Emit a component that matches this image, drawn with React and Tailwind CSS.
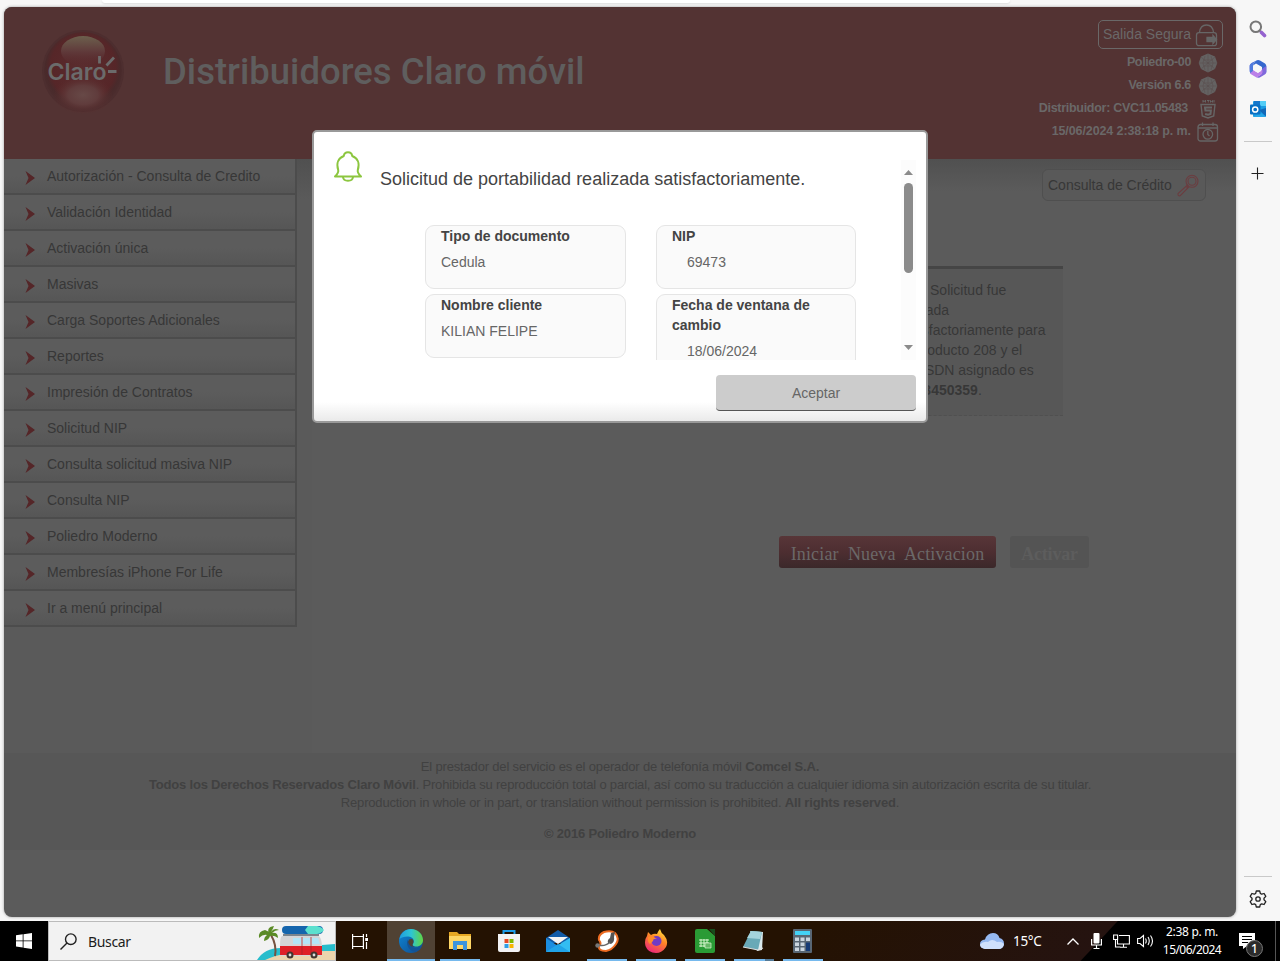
import React from "react";

const menu = [
  "Autorización - Consulta de Credito",
  "Validación Identidad",
  "Activación única",
  "Masivas",
  "Carga Soportes Adicionales",
  "Reportes",
  "Impresión de Contratos",
  "Solicitud NIP",
  "Consulta solicitud masiva NIP",
  "Consulta NIP",
  "Poliedro Moderno",
  "Membresías iPhone For Life",
  "Ir a menú principal",
];

function ClaroLogo() {
  return (
    <svg className="block h-[92px] w-[92px] shrink-0" viewBox="0 0 92 92">
      <defs>
        <radialGradient id="ball" cx="50%" cy="45%" r="52%">
          <stop offset="0" stopColor="#5a2c2e" />
          <stop offset="0.8" stopColor="#562628" />
          <stop offset="0.92" stopColor="#492a2b" />
          <stop offset="1" stopColor="#4b2c2d" />
        </radialGradient>
        <radialGradient id="glow">
          <stop offset="0" stopColor="#674947" />
          <stop offset="0.5" stopColor="#603c3c" />
          <stop offset="1" stopColor="#5a2a2b" stopOpacity="0" />
        </radialGradient>
        <linearGradient id="shine" x1="0" y1="0" x2="0" y2="1">
          <stop offset="0" stopColor="#6c604d" />
          <stop offset="0.5" stopColor="#603b3b" />
          <stop offset="1" stopColor="#5a2c30" stopOpacity="0" />
        </linearGradient>
      </defs>
      <circle cx="46" cy="46" r="41" fill="#4d2e2f" />
      <circle cx="46" cy="46" r="39" fill="url(#ball)" />
      <ellipse cx="46" cy="70" rx="30" ry="19" fill="url(#glow)" />
      <ellipse cx="46" cy="26" rx="22" ry="15" fill="url(#shine)" />
      <text x="10.500" y="54.500" fontSize="22.500" fontWeight="600" fontFamily="Inter, sans-serif" fill="#6b6b6b" textLength="59" lengthAdjust="spacingAndGlyphs">Claro</text>
      <path d="M62.500 31v7.500M69.500 40.500l7.500-8M71 46.500h8.500" stroke="#6b6b6b" strokeWidth="2.800" fill="none" />
    </svg>
  );
}

function Lock() {
  return (
    <svg className="block h-6 w-6" viewBox="0 0 24 24" fill="none" stroke="#666" strokeWidth="1.300">
      <path d="M4.500 9.500C5 4.500 8 2 11.500 2s6.500 2.500 7 7.500" />
      <rect x="1.500" y="9.700" width="20" height="13" rx="2.500" />
      <path d="M12 14.500h6v-2l3.500 4-3.500 4v-2h-6z" fill="#666" />
    </svg>
  );
}

function Sphere() {
  return (
    <svg className="block h-5 w-5" viewBox="0 0 20 20">
      <path d="M10 .5l7 3 2.300 6.500-2.300 6-7 3.500-7-3.500L.7 10 3 3.500z" fill="#646262" />
      <path d="M10 1v18M1 10h18M3 4l14 12M17 4L3 16M5 7h10M5 13h10M7 3L5 10l2 7M13 3l2 7-2 7" stroke="#5b4e4e" strokeWidth=".5" fill="none" />
    </svg>
  );
}

function Html5() {
  return (
    <svg className="block h-5 w-5" viewBox="0 0 20 20" fill="none" stroke="#666">
      <path d="M3 5.500h14l-1.300 11.500L10 19l-5.700-2z" strokeWidth="1.400" />
      <path d="M14 8.500H7l.4 3h5.500l-.4 3.500-2.500.8-2.900-.8" strokeWidth="2" />
      <path d="M5 1v2.500M7.500 1v2.500M5 2.200h2.500M9 1.500h2.500M10.300 1.500v2M12.500 3.500V1.500l1 1 1-1v2M16 1v2.500" strokeWidth="1" />
    </svg>
  );
}

function CalendarClock() {
  return (
    <svg className="block h-5 w-[22px]" viewBox="0 0 22 20" fill="none" stroke="#666" strokeWidth="1.300">
      <rect x="1" y="2.500" width="19.500" height="16.500" rx="2.500" />
      <path d="M1 6h19.500M5.500.5v3.500M16 .5v3.500" />
      <circle cx="10.800" cy="12.300" r="4.800" />
      <path d="M10.800 9v3.500l1.700 1.500" />
    </svg>
  );
}

function HeaderRow({ label, spacing, children }) {
  return (
    <div className={"flex h-[23px] items-center justify-end " + spacing}>
      <span className="-mt-[1px] whitespace-nowrap text-[12.500px] font-bold">{label}</span>
      <span className="mt-px flex w-[22px] justify-center">{children}</span>
    </div>
  );
}

function Header() {
  return (
    <header className="flex h-[152px] shrink-0 justify-between bg-[#533333]">
      <div className="flex pl-[33px] pt-[18px]">
        <ClaroLogo />
        <h1 className="ml-[34px] mt-[25px] whitespace-nowrap font-['Roboto',sans-serif] text-[36.500px] font-medium leading-[44px] text-[#5f5e5e]">Distribuidores Claro móvil</h1>
      </div>
      <div className="flex flex-col items-end pr-[13px] pt-[13px] text-[#6a6868]">
        <div className="flex h-[29px] w-[125px] items-center justify-between rounded-[5px] border border-[#6a6868] pl-1 pr-[3px]">
          <span className="whitespace-nowrap text-[14px]">Salida Segura</span>
          <Lock />
        </div>
        <div className="mt-[2px] flex flex-col pr-1">
          <HeaderRow spacing="gap-[6px] tracking-[-0.360px]" label="Poliedro-00"><Sphere /></HeaderRow>
          <HeaderRow spacing="gap-[6px] tracking-[-0.320px]" label="Versión 6.6"><Sphere /></HeaderRow>
          <HeaderRow spacing="gap-[9px] tracking-[-0.280px]" label="Distribuidor: CVC11.05483"><Html5 /></HeaderRow>
          <HeaderRow spacing="gap-[6px] tracking-[-0.100px]" label="15/06/2024 2:38:18 p. m."><CalendarClock /></HeaderRow>
        </div>
      </div>
    </header>
  );
}

function Sidebar() {
  return (
    <nav className="w-[308px] shrink-0 bg-[linear-gradient(#505050,#5a5a5a_40px)]">
      <ul className="w-[293px] border-r-2 border-[#4c4c4c]">
        {menu.map((m) => (
          <li key={m} className="flex h-9 items-center border-b-2 border-[#4c4c4c] bg-linear-to-b from-[#5c5c5c] from-50% to-[#565656] text-[14px] text-[#373737]">
            <svg className="ml-[21px] mt-[3px] block h-[14px] w-[10px]" viewBox="0 0 10 14">
              <path d="M.5 0L10 7 .5 14 3.500 7z" fill="#552628" />
            </svg>
            <span className="ml-3 whitespace-nowrap">{m}</span>
          </li>
        ))}
      </ul>
    </nav>
  );
}

function Main() {
  return (
    <main className="flex flex-1 flex-col items-end bg-[linear-gradient(#505050,#5b5b5b_32px)]">
      <div className="mr-[30px] mt-[10px] flex h-8 w-[164px] items-center rounded-md border border-[#4f4f4f] bg-[#595959] pl-[5px] text-[14px] text-[#373737]">
        <span className="whitespace-nowrap">Consulta de Crédito</span>
        <svg className="ml-[4px] block h-[23px] w-[23px] shrink-0" viewBox="0 0 23 23" fill="none" stroke="#6b3d40" strokeWidth="1.100">
          <circle cx="16" cy="7.300" r="6" />
          <circle cx="16" cy="7.300" r="4" />
          <path d="M11.500 11L2 19.500q-.5 1.800 1.200 2.400l1-.2 8.600-8.700M12.500 11.500l-2 2" />
        </svg>
      </div>
      <div className="mr-[173px] mt-[65px] h-[150px] w-[180px] border-b border-t-[3px] border-b-[#505050] border-t-[#454545] bg-[#575757] pl-[17px] pt-[11px] text-[14px] leading-5 text-[#373737] [border-bottom-style:dashed]">
        <p className="whitespace-nowrap"><span className="ml-[9px]">Su Solicitud fue</span><br />enviada<br />satisfactoriamente para<br />el producto 208 y el<br />MSISDN asignado es<br /><b>3133450359</b>.</p>
      </div>
      <div className="mr-[147px] mt-[120px] flex gap-[14px] font-['Liberation_Serif',serif] text-[18px] font-bold">
        <div className="flex h-8 w-[217px] items-center justify-center whitespace-pre rounded-[3px] bg-linear-to-b from-[#583638] via-[#4d2e31] to-[#3b282a] pt-[5px] font-normal tracking-[0.140px] text-[#6b6868]">Iniciar  Nueva  Activacion</div>
        <div className="flex h-8 w-[79px] items-center justify-center rounded-[3px] bg-[#545454] pt-[5px] tracking-[-0.200px] text-[#5d5d5d]">Activar</div>
      </div>
    </main>
  );
}

function Card({ label, value, indent }) {
  return (
    <div className="rounded-[9px] border border-[#e5e5e5] bg-[#fafafa] pb-4 pl-[15px] pr-[14px] text-[14px] leading-5">
      <div className="font-bold text-[#444]">{label}</div>
      <div className={"mt-[6px] text-[#666] " + indent}>{value}</div>
    </div>
  );
}

function Dialog() {
  return (
    <div className="absolute left-[312px] top-[130px] flex h-[293px] w-[616px] flex-col rounded-[5px] border-2 border-[#999] bg-[linear-gradient(#fff_270px,#eaeaea)]">
      <div className="flex h-[228px] pl-[19px] pr-[10px]">
        <svg className="mt-[18px] block h-[32px] w-[30px] shrink-0" viewBox="0 0 30 32" fill="none" stroke="#8cc63f" strokeWidth="2" strokeLinejoin="round">
          <path d="M2 26.500C4.500 24 5.800 22.500 5.200 20 3 13 5.500 8 10.800 6c.6-5 7.800-5 8.400 0C24.500 8 27 13 24.800 20c-.6 2.500 .7 4 3.200 6.500z" />
          <path d="M10 27c.5 5 9.500 5 10 0" />
        </svg>
        <div className="mt-7 flex h-[200px] flex-1 overflow-hidden">
          <div className="flex-1">
            <p className="ml-[17px] mt-[7px] whitespace-nowrap text-[18px] leading-6 text-[#444]">Solicitud de portabilidad realizada satisfactoriamente.</p>
            <div className="ml-[62px] mt-[34px] grid w-fit grid-cols-[201px_200px] items-start gap-x-[30px] gap-y-[5px]">
              <Card label="Tipo de documento" value="Cedula" indent="" />
              <Card label="NIP" value="69473" indent="ml-[15px]" />
              <Card label="Nombre cliente" value="KILIAN FELIPE" indent="" />
              <Card label="Fecha de ventana de cambio" value="18/06/2024" indent="ml-[15px]" />
            </div>
          </div>
          <div className="flex w-[15px] shrink-0 flex-col items-center justify-between bg-[#fcfcfc] pb-[10px] pt-[10px]">
            <div className="flex flex-col items-center">
              <svg className="block h-[5px] w-[9px]" viewBox="0 0 9 5"><path d="M0 5L4.500 0 9 5z" fill="#8b8b8b" /></svg>
              <div className="mt-2 h-[90px] w-[9px] rounded-full bg-[#8b8b8b]" />
            </div>
            <svg className="block h-[5px] w-[9px]" viewBox="0 0 9 5"><path d="M0 0h9L4.500 5z" fill="#8b8b8b" /></svg>
          </div>
        </div>
      </div>
      <button className="mr-[10px] mt-[15px] h-9 w-[200px] self-end rounded-[4px] border-b border-[#555] bg-[#ccc] pt-[2px] text-[14px] text-[#666]">Aceptar</button>
    </div>
  );
}

function Footer() {
  return (
    <footer className="h-[97px] shrink-0 bg-[#575757] pt-[5px] text-center text-[13px] leading-[18px] text-[#414141]">
      <p className="tracking-[-0.170px]">El prestador del servicio es el operador de telefonía móvil <b>Comcel S.A.</b></p>
      <p className="whitespace-nowrap tracking-[-0.185px]"><b>Todos los Derechos Reservados Claro Móvil</b>. Prohibida su reproducción total o parcial, así como su traducción a cualquier idioma sin autorización escrita de su titular.</p>
      <p className="tracking-[-0.170px]">Reproduction in whole or in part, or translation without permission is prohibited. <b>All rights reserved</b>.</p>
      <p className="mt-[13px] font-bold tracking-[-0.180px]">© 2016 Poliedro Moderno</p>
    </footer>
  );
}

function EdgeBar() {
  return (
    <aside className="flex w-11 flex-col items-center">
      <svg className="mt-[13px] block h-[18px] w-[18px]" viewBox="0 0 18 18" fill="none">
        <circle cx="6.800" cy="6.800" r="5.300" stroke="#777" strokeWidth="2" />
        <path d="M11 11l1.500 1.500" stroke="#666" strokeWidth="2" />
        <path d="M12.500 12.500l3 3" stroke="#9563cf" strokeWidth="3.600" strokeLinecap="round" />
      </svg>
      <svg className="mt-[22px] block h-[18px] w-[18px]" viewBox="0 0 18 18">
        <path d="M9 0L5 2.300Q3.500 5 3.700 11L1.500 13.500Q.5 12 .7 5.500 1 4 3 3z" fill="#5a64d4" />
        <path d="M8 .3Q9.500-.2 11 .5l5 3q1.300 1 1.300 2.500v6.500L13 10V7L7 3.500 4 5.500Q5 1.500 8 .3z" fill="#3568ce" />
        <path d="M17.300 6v6q0 1.500-1.500 2.500l-5 2.900Q9 18 7.500 17.300L12 14.500Q13.500 13 13 9z" fill="#8069dc" />
        <path d="M13 9.500q1.500 3.500-1 5.200L7.500 17.400l-5-2.800Q.5 13.500 1 12l3-2 5 3z" fill="#bb80e8" />
        <path d="M.7 5.500Q.9 4 2.500 3L7 .8Q3.800 3 4 7v4L1.300 13Q.5 12 .7 10z" fill="#507bdd" />
        <path d="M9 5.300l3.200 1.900v3.700L9 12.700l-3.200-1.800V7.200z" fill="#f7f7f7" />
      </svg>
      <svg className="mt-[22px] block h-[18px] w-[18px]" viewBox="0 0 18 18">
        <rect x="4" y="1" width="13" height="16" rx="1" fill="#1a9de2" />
        <path d="M5 1h6v5H5z" fill="#1576cb" />
        <path d="M11 1h6v5h-6z" fill="#53cdf6" />
        <path d="M10 10l7-2v8.500z" fill="#1368b8" />
        <path d="M4 17h13l-5-4z" fill="#28a7e8" />
        <rect x="1" y="4.500" width="10.500" height="10" rx="1" fill="#0870c4" />
        <circle cx="6.200" cy="9.500" r="2.600" fill="none" stroke="#fff" strokeWidth="1.500" />
      </svg>
      <div className="mt-[23px] h-px w-7 bg-[#c9c9c9]" />
      <svg className="mr-px mt-[25px] block h-[13px] w-[13px]" viewBox="0 0 13 13"><path d="M6.500 .5v12M.5 6.500h12" stroke="#222" strokeWidth="1.100" /></svg>
      <div className="mt-auto h-px w-7 bg-[#c9c9c9]" />
      <svg className="mb-[13px] mt-[13px] block h-[18px] w-[18px]" viewBox="0 0 18 18" fill="none" stroke="#222" strokeWidth="1.300" strokeLinejoin="round">
        <path d="M7.300 1h3.400l.6 2.400 1.400.8 2.400-.7 1.700 2.900L15 8.200v1.600l1.800 1.800-1.700 2.900-2.400-.7-1.400.8-.6 2.400H7.300l-.6-2.400-1.400-.8-2.400.7-1.700-2.900L3 9.800V8.200L1.200 6.400l1.700-2.900 2.400.7 1.400-.8z" />
        <circle cx="9" cy="9" r="2.200" />
      </svg>
    </aside>
  );
}

function BeachVan() {
  return (
    <svg className="block h-[38px] w-[79px]" viewBox="0 0 79 38">
      <path d="M1 38Q9 25 27 26L79 22V38z" fill="#27bdcc" />
      <path d="M9 38Q28 28 79 29V38z" fill="#ecd4ac" />
      <path d="M15 13q6 10 4 21" stroke="#765340" strokeWidth="2" fill="none" />
      <path d="M14 14Q9 5 18 4q-1 3-3 6 3-5 8-2-4 0-7 3 6-1 6 5-4-3-8-2-1 4-6 5 0-4 3-6-4-1-8 3Q2 9 9 8q3 1 5 3z" fill="#5b8b26" />
      <rect x="26" y="4" width="41" height="8" rx="4" fill="#1565ad" />
      <path d="M52 4h9q5 1 7 4-2 3-7 4h-9l-3-4z" fill="#5ce0ce" />
      <path d="M27 13h36" stroke="#54616b" strokeWidth="1.500" />
      <path d="M26 14h36q3 0 4 9v11H24V24q0-9 2-10z" fill="#d5d5d7" />
      <path d="M24 24h42v9H24z" fill="#df2027" />
      <path d="M37 16h8v6h-8zM47 16h7v6h-7zM56 16h6l2 6h-8z" fill="#b2e5f7" />
      <path d="M46 15v18M55 15v18" stroke="#a22228" strokeWidth=".7" />
      <circle cx="34" cy="33" r="3.500" fill="#42352f" /><circle cx="58" cy="33" r="3.500" fill="#42352f" />
      <circle cx="34" cy="33" r="1.400" fill="#ddd" /><circle cx="58" cy="33" r="1.400" fill="#ddd" />
    </svg>
  );
}

function Tile({ children, active, line }) {
  return (
    <div className={"flex h-10 w-[48px] flex-col items-center justify-between " + (active ? "bg-[#504234]" : "")}>
      <div className="flex h-[38px] items-center pt-[2px]">{children}</div>
      <div className={"h-[2px] " + line} />
    </div>
  );
}

function Taskbar() {
  return (
    <div className="flex h-10 shrink-0 bg-[linear-gradient(133deg,#241202_0,#241202_600px,#251310_817px,#000_818px)] font-['Noto_Sans',sans-serif] text-white">
      <div className="flex w-12 items-center justify-center bg-black">
        <svg className="block h-4 w-4" viewBox="0 0 16 16" fill="#fff"><path d="M0 2.200l6.700-.9v6.200H0zM7.500 1.200L16 0v7.500H7.500zM0 8.300h6.700v6.200L0 13.600zM7.500 8.300H16V16l-8.500-1.200z" /></svg>
      </div>
      <div className="flex h-10 w-[288px] items-center border border-[#bbb] bg-[#f2f2f2] text-[#1c1c1c]">
        <svg className="ml-[11px] block h-[17px] w-[17px]" viewBox="0 0 17 17" fill="none" stroke="#222" strokeWidth="1.400"><circle cx="10.800" cy="6.200" r="5.300" /><path d="M7 10L.5 16.500" /></svg>
        <span className="ml-[11px] text-[14px] tracking-[-0.350px]">Buscar</span>
        <span className="ml-auto overflow-hidden"><BeachVan /></span>
      </div>
      <div className="flex w-[51px] items-center justify-center bg-[#241202]">
        <svg className="mr-[3px] block h-[17px] w-[17px]" viewBox="0 0 17 17" fill="none" stroke="#fff" strokeWidth="1.200"><path d="M.6 1v2.500h10.800V1M.6 16v-2.500h10.800V16M.6 3.500v10M11.400 3.500v10M14.500 1v3M14.500 9v7" /><path d="M13.200 5h2.800v3h-2.800z" fill="#fff" stroke="none" /></svg>
      </div>
      <div className="flex">
        <Tile active line="w-12 bg-[#76b9ed]">
          <svg className="block h-6 w-6" viewBox="0 0 24 24">
            <defs>
              <linearGradient id="edgeTop" x1="0" x2="1"><stop stopColor="#1f9de0" /><stop offset=".5" stopColor="#2ec5d3" /><stop offset="1" stopColor="#62d63f" /></linearGradient>
              <linearGradient id="edgeLow" x1="0" y1="0" x2="1" y2="1"><stop stopColor="#0d88d8" /><stop offset="1" stopColor="#114a8b" /></linearGradient>
            </defs>
            <circle cx="12" cy="12" r="12" fill="url(#edgeLow)" />
            <path d="M.5 10C1.500 4 6.500 0 12 0c7 0 12 5.500 12 11 0 4-3 6.500-6.500 6.500-3 0-4.500-1.200-3.500-2.500 2.500-4-1-8-5.500-7.500Q3 7.500.5 10z" fill="url(#edgeTop)" />
            <path d="M8.500 11C6.500 17 11 22.500 17 23q4-1.500 5.500-5c-5 3-10 .5-10.500-3z" fill="#135395" />
            <path d="M10 10.500q4-1.500 4.500 1.500 0 2-1 3.500-.5 1.500 2 2.300-4 .2-5.500-2.500T10 10.500z" fill="#504234" />
          </svg>
        </Tile>
        <Tile line="ml-[2px] w-10 bg-[#76b9ed]">
          <svg className="ml-[2px] block h-5 w-[22px]" viewBox="0 0 22 20"><path d="M0 1h8l2 2h12v15H0z" fill="#e7a824" /><path d="M0 5h22v13H0z" fill="#ffd766" /><path d="M4 19v-9h14v9h-4v-5H8v5z" fill="#3d94dc" /></svg>
        </Tile>
        <Tile line="w-0">
          <svg className="ml-[4px] block h-6 w-6" viewBox="0 0 24 24"><path d="M6.500 6V2h11v4" fill="none" stroke="#1c9be8" strokeWidth="2" /><path d="M1 5h22v16q0 2-2 2H3q-2 0-2-2z" fill="#f2f2f4" /><path d="M7.500 10h4v4h-4z" fill="#e84a24" /><path d="M12.500 10h4v4h-4z" fill="#7fba00" /><path d="M7.500 15h4v4h-4z" fill="#2f9ee6" /><path d="M12.500 15h4v4h-4z" fill="#f7b500" /></svg>
        </Tile>
        <Tile line="w-0">
          <svg className="ml-[6px] block h-6 w-6" viewBox="0 0 24 24"><path d="M0 9L12 1l12 8v5H0z" fill="#125ba7" /><path d="M2 8h20L12 15z" fill="#f4f4f4" /><path d="M0 9l12 8-12 6z" fill="#1b8de0" /><path d="M24 9v14H0l24-14z" fill="#33bdf2" /><path d="M0 23l12-8 12 8z" fill="#20a3e8" /></svg>
        </Tile>
        <Tile line="ml-2 w-10 bg-[#76b9ed]">
          <svg className="ml-[8px] block h-6 w-6" viewBox="0 0 24 24">
            <path d="M4 11Q3 6 9 3q7-2 11 1 5 5 1 11-4 6-10 7-8 0-7-5 3-2 0-6z" fill="#fff" stroke="#ed6b21" strokeWidth="2" />
            <path d="M13 14q-1-3 2-5l1-5 4-1-1 5q1 5-3 7z" fill="#555" />
            <path d="M3 16q7 2 12-3" fill="none" stroke="#666" strokeWidth="1.500" />
            <circle cx="2.500" cy="16.500" r="2.200" fill="#777" />
          </svg>
        </Tile>
        <Tile line="ml-[10px] w-10 bg-[#76b9ed]">
          <svg className="ml-[10px] block h-6 w-6" viewBox="0 0 24 24">
            <defs><linearGradient id="fox" x1=".8" y1="0" x2=".3" y2="1"><stop stopColor="#ffe640" /><stop offset=".45" stopColor="#ff8427" /><stop offset="1" stopColor="#ed267a" /></linearGradient></defs>
            <path d="M3 7l1-4 3 3q3-2 6-1Q14 2 16 0q1 4 4 6 5 6 2 12-4 6-10 6Q4 24 1.500 17 0 11 3 7z" fill="url(#fox)" />
            <circle cx="12.500" cy="12" r="5" fill="#713bc5" /><path d="M4 8q4-2 9 2-4-1-4 2l-3 3q-3-2-2-7z" fill="#ff8b2b" />
          </svg>
        </Tile>
        <Tile line="ml-3 w-10 bg-[#76b9ed]">
          <svg className="ml-[12px] block h-6 w-5" viewBox="0 0 20 24"><path d="M2 0h10l8 7v15q0 2-2 2H2q-2 0-2-2V2Q0 0 2 0z" fill="#2a9b35" /><path d="M14 0h6v7z" fill="#174d1c" /><path d="M4 11h10M4 14h10M4 17h8M6 10v8M9 10v8M12 10v8" stroke="#d8f5ce" strokeWidth="1" /><path d="M10 14h6v5h-6z" fill="#65b765" stroke="#d8f5ce" strokeWidth=".7" /></svg>
        </Tile>
        <Tile line="ml-[14px] w-10 bg-[linear-gradient(90deg,#76b9ed_31px,#547a97_31px)]">
          <svg className="ml-[12px] block h-6 w-6" viewBox="0 0 24 24"><path d="M9 2l13 1-1 18-5 1z" fill="#d9e9ed" /><path d="M10 2l11 1-4 18-15-3z" fill="#69a9b7" /><path d="M10 2l11 1-2 7-13-1z" fill="#a4d3dc" /><path d="M2 18l15 3 5-2" fill="none" stroke="#ddd" strokeWidth="1.200" /></svg>
        </Tile>
        <Tile line="ml-4 w-10 bg-[#76b9ed]">
          <svg className="ml-[15px] block h-6 w-[19px]" viewBox="0 0 19 24"><rect width="19" height="24" rx="1" fill="#586674" /><path d="M2 2h15v4H2z" fill="#43d2f6" /><path d="M2 8.500h4v3.500H2zM7.500 8.500h4v3.500h-4zM13 8.500h4v3.500h-4zM2 13.500h4V17H2zM7.500 13.500h4V17h-4zM2 18.500h4V22H2zM7.500 18.500h4V22h-4z" fill="#cad5df" /><path d="M13 13.500h4V22h-4z" fill="#163b76" /></svg>
        </Tile>
      </div>
      <div className="ml-auto flex items-center">
        <svg className="block h-4 w-6" viewBox="0 0 24 16"><path d="M5 16Q0 15 0 11q0-4 5-4.500Q7 0 13 0q5 0 6.500 5 4.500 1 4.500 5.500T19 16z" fill="#96b9f1" /><path d="M5 16Q0 15 0 11.500 3 8 8 9q4-4 9 0 4-1 7 2-1 5-5 5z" fill="#cfe0fc" /></svg>
        <span className="ml-[9px] w-[46px] text-[13.500px] tracking-[-0.300px]">15°C</span>
        <svg className="ml-[8px] block h-[7px] w-3" viewBox="0 0 12 7" fill="none" stroke="#fff" strokeWidth="1.300"><path d="M.5 6.500L6 1l5.500 5.500" /></svg>
        <svg className="ml-3 block h-4 w-[11px]" viewBox="0 0 11 16"><rect x="2.500" width="6" height="10.500" rx="1" fill="#fff" /><path d="M.6 6v6h9.800V6M5.500 12v3.500M2.500 15.500h6" stroke="#fff" strokeWidth="1.200" fill="none" /></svg>
        <svg className="ml-[11px] block h-[14px] w-[17px]" viewBox="0 0 17 14" fill="none" stroke="#fff" strokeWidth="1.100"><path d="M6 1.500h10.400v8.500H4.500V6M10.500 10v3M7 13.200h7M.6 1h4v4.500h-4zM2.500 5.500V13h5" /></svg>
        <svg className="ml-[7px] block h-[14px] w-[17px]" viewBox="0 0 17 14" fill="none" stroke="#fff" strokeWidth="1.100"><path d="M.6 4.500H3L6.500 1.500v11L3 9.500H.6zM8.500 4.500q1.500 2.500 0 5M11 3q2.500 4 0 8M13.500 1.500q4 5.500 0 11" /></svg>
        <div className="ml-[7px] w-[62px] whitespace-nowrap text-center text-[12px] leading-[18px] tracking-[-0.550px]"><span className="tracking-[-0.300px]">2:38 p. m.</span><br />15/06/2024</div>
        <div className="relative ml-[16px] mr-[20px] h-[18px] w-4">
          <svg className="block h-[18px] w-4" viewBox="0 0 16 18"><path d="M0 1h16v13H8l-4 3v-3H0z" fill="#fff" /><path d="M3 4.500h10M3 7.500h10M3 10.500h6" stroke="#000" strokeWidth="1.100" /></svg>
          <span className="absolute left-[7px] top-[8px] flex h-[17px] w-[17px] items-center justify-center rounded-full border border-[#777] bg-[#2b2b2b] text-[12px] font-medium leading-none">1</span>
        </div>
        <div className="mr-[4px] h-10 w-px bg-[#555]" />
      </div>
    </div>
  );
}

export default function App() {
  return (
    <div className="relative flex h-[961px] w-[1280px] flex-col overflow-hidden bg-[#f7f7f7] font-['Liberation_Sans',Arial,sans-serif]">
      <div className="flex h-[7px] shrink-0 pl-[102px]"><div className="h-[3px] w-[908px] rounded-b-lg bg-white shadow-[0_1px_2px_#ddd]" /></div>
      <div className="flex h-[914px] shrink-0 pl-1">
        <div className="flex h-[910px] w-[1232px] flex-col overflow-hidden rounded-lg bg-[#5b5b5b] shadow-[0_0_3px_#999]">
          <Header />
          <div className="flex h-[594px] shrink-0">
            <Sidebar />
            <Main />
          </div>
          <Footer />
        </div>
        <EdgeBar />
      </div>
      <Taskbar />
      <Dialog />
    </div>
  );
}
